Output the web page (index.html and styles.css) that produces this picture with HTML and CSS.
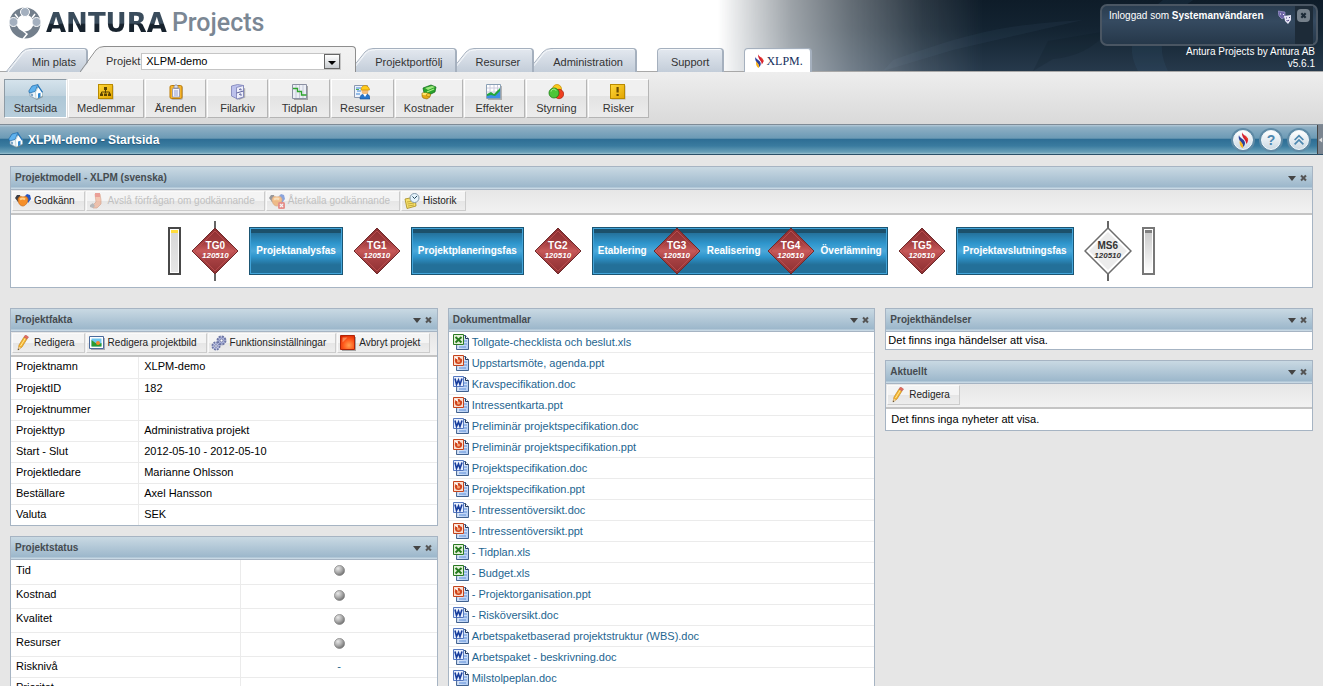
FILE: index.html
```html
<!DOCTYPE html>
<html lang="sv">
<head>
<meta charset="utf-8">
<title>XLPM-demo - Startsida</title>
<link rel="stylesheet" href="styles.css">
</head>
<body>
<svg class="defs" aria-hidden="true">
  <defs>
    <linearGradient id="gTab" x1="0" y1="0" x2="0" y2="1"><stop offset="0" stop-color="#e3e8ef"/><stop offset="1" stop-color="#c3cdd9"/></linearGradient>
    <linearGradient id="gRed" x1="0" y1="0" x2="0" y2="1"><stop offset="0" stop-color="#8c2f31"/><stop offset=".3" stop-color="#9e3a3c"/><stop offset=".5" stop-color="#c85a5a"/><stop offset=".7" stop-color="#a53f41"/><stop offset="1" stop-color="#8c2f31"/></linearGradient>
    <linearGradient id="gGold" x1="0" y1="0" x2="1" y2="1"><stop offset="0" stop-color="#ffd83a"/><stop offset="1" stop-color="#e2a400"/></linearGradient>
    <radialGradient id="gBall" cx=".35" cy=".3" r=".75"><stop offset="0" stop-color="#e9e9e9"/><stop offset=".5" stop-color="#b0b0b0"/><stop offset="1" stop-color="#6c6c6c"/></radialGradient>
    <radialGradient id="gStop" cx=".6" cy=".7" r=".8"><stop offset="0" stop-color="#ffa050"/><stop offset=".5" stop-color="#ff5a1c"/><stop offset="1" stop-color="#d92400"/></radialGradient>
    <linearGradient id="gPage" x1="0" y1="0" x2="1" y2="1"><stop offset="0" stop-color="#ffffff"/><stop offset="1" stop-color="#a9c6f2"/></linearGradient>
  </defs>
  <symbol id="house" viewBox="0 0 16 16">
    <path d="M3 12l6 4 6-3v-2l-6 3z" fill="#777" opacity=".6"/>
    <path d="M2 6v6l6 3 6-3V7L9 3z" fill="#eef5fb" stroke="#7d93a8" stroke-width=".7"/>
    <path d="M7.500 8l3-5 4 5v4l-6.500 3z" fill="#fff" stroke="#8aa" stroke-width=".5"/>
    <path d="M.8 7L4 2l6-1.500L7 7.500 1.500 9z" fill="#5fb2ee" stroke="#1c69a8" stroke-width=".7"/>
    <path d="M10 .5l5 7.500-1 .8-4-6z" fill="#2275bd"/>
    <path d="M10 9.500l2.500-.8v4.600L10 14.200z" fill="#2f87cf"/><path d="M3 9.500l2 .5v2.500l-2-.8z" fill="#7ea6c6"/>
  </symbol>
  <symbol id="org" viewBox="0 0 16 16">
    <rect x="1.500" y="1.500" width="14" height="14" fill="#8a7a50" opacity=".5"/><rect x=".5" y=".5" width="14" height="14" fill="url(#gGold)" stroke="#b98a00"/>
    <path d="M7.500 5v4M3.500 10V8h8v2" fill="none" stroke="#5c4300"/><path d="M6 3h3v3H6zM2 9.500h3V12H2zM6 9.500h3V12H6zM10 9.500h3V12h-3z" fill="#5c4300"/>
  </symbol>
  <symbol id="clip" viewBox="0 0 16 16">
    <rect x="3" y="2" width="12" height="14" rx="2" fill="#888" opacity=".5"/><rect x="2" y="1.500" width="12" height="13" rx="1.500" fill="#f6b52c" stroke="#bd7d08"/>
    <path d="M4.500 4.500h7v8.500h-7z" fill="#f3f5ff" stroke="#8189b5" stroke-width=".7"/><path d="M6 4V2.500L7 1h2l1 1.500V4z" fill="#dfe2ee" stroke="#7c8098" stroke-width=".7"/>
    <path d="M6 7h4M6 9h4M6 11h4" stroke="#8c94c4" stroke-width=".9"/>
  </symbol>
  <symbol id="cabinet" viewBox="0 0 16 16">
    <path d="M8 14.500l6-2V4l1.200.6v9L9 16z" fill="#888" opacity=".6"/><path d="M1.500 2l6-1.500 6 1v11.500l-6 2-6-3z" fill="#bcc1ec" stroke="#7a7fb5" stroke-width=".8"/><path d="M6.500 3.500l7-2v11.500l-7 2z" fill="#f0f1fc" stroke="#7a7fb5" stroke-width=".8"/>
    <path d="M6.500 9l7-2M9 5.500l2-.6v1.500M9 10.500l2-.6v2" fill="none" stroke="#5d639e"/>
  </symbol>
  <symbol id="gantt" viewBox="0 0 16 16">
    <path d="M2 2h14v14H2z" fill="#777" opacity=".6"/><path d="M.5.5h14v14H.5z" fill="#eceff5" stroke="#8b90a2"/><path d="M4 1v13M7.500 1v13M11 1v13" stroke="#c6cad9"/><path d="M1 4.500h4.500v3h4v3.500h5" fill="none" stroke="#2fa52e" stroke-width="1.300"/>
  </symbol>
  <symbol id="people" viewBox="0 0 16 16">
    <path d="M.5 1.500h13v12H.5z" fill="#eef3fb" stroke="#8b98b0"/><path d="M2 4h5M3 7h4M2 10h4" stroke="#3c85d6" stroke-width="1.200"/><path d="M2 5.500h3" stroke="#4caf50"/>
    <path d="M6 15c0-4 2-5 5-5s5 1 5 5z" fill="#2776cc" stroke="#174f92" stroke-width=".6"/><circle cx="11" cy="7" r="3.400" fill="#f3bd7d"/><path d="M7 6c0-6 8-6 8.500 0z" fill="#ffcc1c" stroke="#ca8900" stroke-width=".7"/><path d="M9 10l2 3 2-3" fill="#fff"/>
  </symbol>
  <symbol id="money" viewBox="0 0 16 16">
    <path d="M2 4l8-3 5 2-1 5-6 3-5-2z" fill="#28a32b" stroke="#10651a" stroke-width=".7"/><path d="M4 4l7-2 3 1-7 3z" fill="#9ee77d"/><path d="M6 8l7-3" stroke="#a5ef82" stroke-width="1.200"/>
    <path d="M1 9h5l3 1v3l-3 2-4-1-1-2z" fill="#e6a915" stroke="#8c6400" stroke-width=".6"/><ellipse cx="4" cy="10" rx="2.800" ry="1.200" fill="#ffe36a"/><ellipse cx="7.500" cy="11" rx="2.200" ry="1.500" fill="#f4c735" stroke="#936c05" stroke-width=".5"/>
  </symbol>
  <symbol id="chart" viewBox="0 0 16 16">
    <path d="M2 2h14v14H2z" fill="#777" opacity=".5"/><path d="M.5.5h14v14H.5z" fill="#fff" stroke="#8ba0b5"/><path d="M4 1v10M8 1v8M11.500 1v8M1 4h13M1 8h13" stroke="#ccd"/>
    <path d="M1 10l4-2 3 2 3-3 3-3v6l-4 3-9 0z" fill="#23a63c"/><path d="M1 14v-2l4-1 4 1 5-5v7z" fill="#3d8fe6"/>
  </symbol>
  <symbol id="circles" viewBox="0 0 16 16">
    <circle cx="9" cy="5" r="4.500" fill="#fbc81d" stroke="#c38b00" stroke-width=".7"/><circle cx="11" cy="10" r="4.700" fill="#ee3f20" stroke="#a61d08" stroke-width=".7"/><circle cx="6" cy="9" r="5" fill="#4cc638" stroke="#1b7d12" stroke-width=".8"/><path d="M3 7.500c1-3 4-3 5-1" stroke="#b8f29e" fill="none"/>
  </symbol>
  <symbol id="warn" viewBox="0 0 16 16">
    <rect x="1.500" y="1.500" width="14" height="14" fill="#8a7a50" opacity=".5"/><rect x=".5" y=".5" width="14" height="14" fill="url(#gGold)" stroke="#b98a00"/><path d="M6.500 3h2.200v5.500H6.500zM6.500 10h2.200v2H6.500z" fill="#6b4c00"/>
  </symbol>
  <symbol id="shake" viewBox="0 0 16 16">
    <path d="M0 5l2-3 3 0 1 5-3 2z" fill="#3d3f46"/><path d="M10 3l2-2 3 1 1 4-3 4z" fill="#2456c4"/><path d="M3 6c1-3 3-3 5-2 2-1 4-1 5 2 0 4-3 7-5 7-3 0-5-3-5-7z" fill="#f58f2a" stroke="#c96a18" stroke-width=".7"/><path d="M5 6.500q3-2 5 0" stroke="#ffd08a" fill="none" stroke-width="2"/>
  </symbol>
  <symbol id="thumb" viewBox="0 0 16 16">
    <path d="M6 1h5l1 6v4l-4 4-4 0 0-3 3-3z" fill="#f39a72" stroke="#c2653e" stroke-width=".7"/><path d="M6 0h5v4H6z" fill="#e14d3d"/><path d="M1 12l3-2 2 3-2 2-3-1z" fill="#85888d"/>
  </symbol>
  <symbol id="shakex" viewBox="0 0 16 16">
    <use href="#shake"/><rect x="9" y="9" width="7" height="7" rx="1.500" fill="#e2382e"/><path d="M11 11l3 3M14 11l-3 3" stroke="#fff" stroke-width="1.200"/>
  </symbol>
  <symbol id="history" viewBox="0 0 16 16">
    <path d="M1 6l10-2 1 9-9 2.500z" fill="#f7e16d" stroke="#a48a1c" stroke-width=".8"/><path d="M3 9l7-1M3.500 11l7-1M4 13l6-1" stroke="#b79a2e" stroke-width=".8"/><circle cx="10.500" cy="5" r="4.500" fill="#e4f2fb" stroke="#8298aa"/><path d="M8.500 3.500l2 2 2.500-2.500" fill="none" stroke="#245"/>
  </symbol>
  <symbol id="pencil" viewBox="0 0 16 16">
    <path d="M3 15l1-5 5-8 3 2-5 8z" fill="#f7b52b" stroke="#c18a2a" stroke-width=".7"/><path d="M5.500 11l5-8" stroke="#ffe79a"/><path d="M9 2l1.500-2 3 2L12 4z" fill="#e76b5d" stroke="#b85a50" stroke-width=".6"/><path d="M3 15l.7-3.500L6 13z" fill="#e9cfa7"/><path d="M2.800 15.300l.4-1.800 1 .8z" fill="#333"/>
  </symbol>
  <symbol id="picture" viewBox="0 0 16 16">
    <path d="M2 3h14v12H2z" fill="#667" opacity=".5"/><path d="M.5 1.500h14v12H.5z" fill="#fff" stroke="#4a6a9c"/><path d="M2.500 3.500h10v8h-10z" fill="#6fc7ef"/><path d="M2.500 11.500V5l4 3 3 1 3-1v3.500z" fill="#2c9a2e"/><circle cx="9" cy="8" r="2" fill="#f6862b"/>
  </symbol>
  <symbol id="gears" viewBox="0 0 16 16">
    <circle cx="10.500" cy="5.500" r="4" fill="#aeb6dc" stroke="#6d76a5" stroke-width="2" stroke-dasharray="2.100 1"/><circle cx="10.500" cy="5.500" r="1.500" fill="#fff" stroke="#59628f" stroke-width=".7"/>
    <circle cx="5" cy="11" r="3.600" fill="#c2c8e8" stroke="#6d76a5" stroke-width="1.800" stroke-dasharray="1.900 .9"/><circle cx="5" cy="11" r="1.300" fill="#fff" stroke="#59628f" stroke-width=".7"/>
  </symbol>
  <symbol id="stop" viewBox="0 0 16 16"><path d="M2 2h14v14H2z" fill="#777" opacity=".6"/><path d="M.5.5h14v14H.5z" fill="url(#gStop)" stroke="#b02408"/><path d="M2.500 2.500h5l-5 5z" fill="#ffb27e" opacity=".6"/></symbol>
  <symbol id="page" viewBox="0 0 16 16"><path d="M4 1.500h8.500l3 3v11H3.500z" fill="url(#gPage)" stroke="#40618f"/><path d="M12.500 1.500v3h3" fill="#fff" stroke="#22375a"/><path d="M6 13h7M11 7h3M11 10h3" stroke="#5e8fd8"/></symbol>
  <symbol id="xls" viewBox="0 0 16 16"><use href="#page"/><path d="M.5.5h10v10H.5z" fill="#e3f0d8" stroke="#2b7a22"/><path d="M2.500 3l6 5.500M8.500 3l-6 5.500" stroke="#237a1c" stroke-width="2"/></symbol>
  <symbol id="ppt" viewBox="0 0 16 16"><use href="#page"/><path d="M.5.5h10v10H.5z" fill="#f9e0d2" stroke="#c4431c"/><circle cx="5.500" cy="5.500" r="3.600" fill="#d0441c"/><path d="M2.500 2.500h2v2zM7 2l1.500 2" fill="#fff" stroke="#fff" stroke-width=".8"/><circle cx="5.500" cy="6" r="1.500" fill="#f6a478"/></symbol>
  <symbol id="doc" viewBox="0 0 16 16"><use href="#page"/><path d="M.5.5h10v10H.5z" fill="#eaf1fd" stroke="#5578c0"/><path d="M2 2.500l1.500 6L5.500 4l1.500 4.500 2-6" fill="none" stroke="#173c9c" stroke-width="1.600"/></symbol>
  <symbol id="flame" viewBox="0 0 16 16">
    <path d="M7 0c0 3 6 4 6 8 0 2-1 3-2 4 1-4-5-6-4-12z" fill="#d62030"/><path d="M4 3c0 3 6 4 6 8 0 2-1 3-2 4 1-4-6-6-4-12z" fill="#2a3f9c"/><path d="M5 8c0 2 4 3 3 8-3-1-4-5-3-8z" fill="#f7b21c"/><path d="M10 3c1 2 4 3 3 6-1-2-3-3-3-6z" fill="#e8452c"/>
  </symbol>
  <symbol id="ball" viewBox="0 0 10 10"><circle cx="5" cy="5" r="4.600" fill="url(#gBall)" stroke="#7b7b7b" stroke-width=".6"/></symbol>
  <symbol id="slant" viewBox="0 0 26 24"><path d="M1 24L17 4Q19.500 1 24 1H26V24z" fill="url(#gTab)"/><path d="M0 24L16 4Q19 .5 24 .5H26" fill="none" stroke="#a5b0be"/><path d="M2 24L17 5Q20 2 24 2H26" fill="none" stroke="#f4f7fa"/></symbol>
  <symbol id="slantOn" viewBox="0 0 26 26"><path d="M1 26L17 4Q19.500 1 24 1H26V26z" fill="#efefef"/><path d="M0 26L16 4Q19 .5 24 .5H26" fill="none" stroke="#8e8e8e"/></symbol>
  <symbol id="redGate" viewBox="0 0 48 48"><path d="M24 1L47 24 24 47 1 24z" fill="url(#gRed)" stroke="#6e2a2b"/><path d="M24 4L44 24 24 44 4 24z" fill="none" stroke="#b84c4d"/></symbol>
  <symbol id="whiteGate" viewBox="0 0 48 48"><path d="M24 1L47 24 24 47 1 24z" fill="#fff" stroke="#6d6d6d" stroke-width="1.500"/><path d="M24 5L43 24 24 43 5 24z" fill="#ececec"/></symbol>
</svg>

<header class="top">
  <div class="sky"><svg class="swoosh" viewBox="0 0 620 71" preserveAspectRatio="xMaxYMid slice"><path d="M190 60C270 32 300 25 380 20L250 50 180 71z" fill="#4a6b87" opacity=".1"/><path d="M330 71l15-30 60-10q-20 25-55 28z" fill="#07121c" opacity=".15"/><path d="M460 0q-45 35-25 71h30q-20-40 25-71z" fill="#3c6486" opacity=".15"/></svg></div>
  <a class="logo" href="#" aria-label="Antura Projects">
    <svg class="logoMark" viewBox="0 0 32 32"><circle cx="16" cy="16" r="12" fill="none" stroke="#737f8c" stroke-width="7"/><g fill="#a4b0bf" stroke="#fff" stroke-width="1"><circle cx="16" cy="5" r="4.500"/><circle cx="4.500" cy="15" r="4.500"/><circle cx="27.500" cy="15" r="4.500"/></g><path d="M13 23l5 4-4 5M6 7l3 4M26 7l-3 4" stroke="#fff" stroke-width="1.500" fill="none"/></svg>
    <span class="brand">ANTURA</span><span class="product">Projects</span>
  </a>
  <nav class="tabs">
    <a class="tab first" href="#"><svg class="edge"><use href="#slant"/></svg><span>Min plats</span></a>
    <div class="tab current"><svg class="edge"><use href="#slantOn"/></svg><div class="pick"><label for="project">Projekt</label><div class="combo"><select id="project"><option>XLPM-demo</option></select><i class="arrow"></i></div></div></div>
    <a class="tab t3" href="#"><svg class="edge"><use href="#slant"/></svg><span>Projektportfölj</span></a>
    <a class="tab t2" href="#"><svg class="edge"><use href="#slant"/></svg><span>Resurser</span></a>
    <a class="tab t1" href="#"><svg class="edge"><use href="#slant"/></svg><span>Administration</span></a>
    <a class="tab box" href="#"><span>Support</span></a>
    <a class="tab box xlpm" href="#"><span><svg class="ic"><use href="#flame"/></svg>XLPM.</span></a>
  </nav>
  <div class="account">
    <div class="login"><p>Inloggad som <b>Systemanvändaren</b></p>
      <svg class="masks" viewBox="0 0 14 14"><path d="M0 1l7 1v5l-3 2-3-3z" fill="#6f66a8" stroke="#aaa3d6" stroke-width=".6"/><path d="M6 6l7-1v5l-3 4-3-3z" fill="#e8e6f8"/><path d="M2 4h1M5 4.500h1" stroke="#fff"/><path d="M8 8h1M11 7.500h1M8.500 10.500q1.500 1 2.500-.5" stroke="#4c4484" fill="none"/></svg>
      <div class="side"><button class="out" aria-label="Logga ut"><svg viewBox="0 0 12 12"><path d="M4 4l4 4M8 4l-4 4" stroke="#1b2936" stroke-width="2"/></svg></button></div></div>
    <p class="version">Antura Projects by Antura AB<br>v5.6.1</p>
  </div>
</header>

<nav class="tools">
  <a class="tool on" href="#"><svg class="ic"><use href="#house"/></svg>Startsida</a>
  <a class="tool" href="#"><svg class="ic"><use href="#org"/></svg>Medlemmar</a>
  <a class="tool" href="#"><svg class="ic"><use href="#clip"/></svg>Ärenden</a>
  <a class="tool" href="#"><svg class="ic"><use href="#cabinet"/></svg>Filarkiv</a>
  <a class="tool" href="#"><svg class="ic"><use href="#gantt"/></svg>Tidplan</a>
  <a class="tool" href="#"><svg class="ic"><use href="#people"/></svg>Resurser</a>
  <a class="tool" href="#"><svg class="ic"><use href="#money"/></svg>Kostnader</a>
  <a class="tool" href="#"><svg class="ic"><use href="#chart"/></svg>Effekter</a>
  <a class="tool" href="#"><svg class="ic"><use href="#circles"/></svg>Styrning</a>
  <a class="tool" href="#"><svg class="ic"><use href="#warn"/></svg>Risker</a>
</nav>

<div class="titlebar">
  <svg class="ic"><use href="#house"/></svg><h1>XLPM-demo - Startsida</h1>
  <button class="round" aria-label="XLPM"><svg class="big" viewBox="0 0 16 16"><use href="#flame"/></svg></button>
  <button class="round" aria-label="Hjälp">?</button>
  <button class="round" aria-label="Fäll ihop"><svg viewBox="0 0 16 16"><path d="M3 8l5-5 5 5M3 13l5-5 5 5" fill="none" stroke="#4d88b0" stroke-width="2"/></svg></button>
  <button class="drawer" aria-label="Visa sidopanel"><svg viewBox="0 0 6 8"><path d="M5 1v6L1 4z" fill="#ddd"/></svg></button>
</div>

<main>
  <section class="panel">
    <div class="head"><h2>Projektmodell - XLPM (svenska)</h2><button class="down" aria-label="Meny"></button><button class="close" aria-label="Stäng"></button></div>
    <div class="bar">
      <button><svg class="ic"><use href="#shake"/></svg>Godkänn</button>
      <button disabled><svg class="ic"><use href="#thumb"/></svg>Avslå förfrågan om godkännande</button>
      <button disabled><svg class="ic"><use href="#shakex"/></svg>Återkalla godkännande</button>
      <button><svg class="ic"><use href="#history"/></svg>Historik</button>
    </div>
    <div class="model">
      <div class="post start"></div>
      <div class="gate pin"><svg><use href="#redGate"/></svg><b>TG0</b><em>120510</em></div>
      <div class="phase">Projektanalysfas</div>
      <div class="gate"><svg><use href="#redGate"/></svg><b>TG1</b><em>120510</em></div>
      <div class="phase">Projektplaneringsfas</div>
      <div class="gate"><svg><use href="#redGate"/></svg><b>TG2</b><em>120510</em></div>
      <div class="phase joined">Etablering
        <div class="gate"><svg><use href="#redGate"/></svg><b>TG3</b><em>120510</em></div>Realisering
        <div class="gate"><svg><use href="#redGate"/></svg><b>TG4</b><em>120510</em></div>Överlämning</div>
      <div class="gate"><svg><use href="#redGate"/></svg><b>TG5</b><em>120510</em></div>
      <div class="phase">Projektavslutningsfas</div>
      <div class="gate pin white"><svg><use href="#whiteGate"/></svg><b>MS6</b><em>120510</em></div>
      <div class="post"></div>
    </div>
  </section>

  <div class="columns">
    <div class="col">
      <section class="panel">
        <div class="head"><h2>Projektfakta</h2><button class="down" aria-label="Meny"></button><button class="close" aria-label="Stäng"></button></div>
        <div class="bar">
          <button><svg class="ic"><use href="#pencil"/></svg>Redigera</button>
          <button><svg class="ic"><use href="#picture"/></svg>Redigera projektbild</button>
          <button><svg class="ic"><use href="#gears"/></svg>Funktionsinställningar</button>
          <button><svg class="ic"><use href="#stop"/></svg>Avbryt projekt</button>
        </div>
        <table class="facts">
          <tr><th>Projektnamn</th><td>XLPM-demo</td></tr>
          <tr><th>ProjektID</th><td>182</td></tr>
          <tr><th>Projektnummer</th><td></td></tr>
          <tr><th>Projekttyp</th><td>Administrativa projekt</td></tr>
          <tr><th>Start - Slut</th><td>2012-05-10 - 2012-05-10</td></tr>
          <tr><th>Projektledare</th><td>Marianne Ohlsson</td></tr>
          <tr><th>Beställare</th><td>Axel Hansson</td></tr>
          <tr><th>Valuta</th><td>SEK</td></tr>
        </table>
      </section>
      <section class="panel">
        <div class="head"><h2>Projektstatus</h2><button class="down" aria-label="Meny"></button><button class="close" aria-label="Stäng"></button></div>
        <table class="status">
          <tr><th>Tid</th><td><svg class="dot"><use href="#ball"/></svg></td></tr>
          <tr><th>Kostnad</th><td><svg class="dot"><use href="#ball"/></svg></td></tr>
          <tr><th>Kvalitet</th><td><svg class="dot"><use href="#ball"/></svg></td></tr>
          <tr><th>Resurser</th><td><svg class="dot"><use href="#ball"/></svg></td></tr>
          <tr class="low"><th>Risknivå</th><td><a href="#">-</a></td></tr>
          <tr class="low"><th>Prioritet</th><td></td></tr>
        </table>
      </section>
    </div>
    <div class="col">
      <section class="panel">
        <div class="head"><h2>Dokumentmallar</h2><button class="down" aria-label="Meny"></button><button class="close" aria-label="Stäng"></button></div>
        <ul class="docs">
          <li><svg class="ic"><use href="#xls"/></svg><a href="#">Tollgate-checklista och beslut.xls</a></li>
          <li><svg class="ic"><use href="#ppt"/></svg><a href="#">Uppstartsmöte, agenda.ppt</a></li>
          <li><svg class="ic"><use href="#doc"/></svg><a href="#">Kravspecifikation.doc</a></li>
          <li><svg class="ic"><use href="#ppt"/></svg><a href="#">Intressentkarta.ppt</a></li>
          <li><svg class="ic"><use href="#doc"/></svg><a href="#">Preliminär projektspecifikation.doc</a></li>
          <li><svg class="ic"><use href="#ppt"/></svg><a href="#">Preliminär projektspecifikation.ppt</a></li>
          <li><svg class="ic"><use href="#doc"/></svg><a href="#">Projektspecifikation.doc</a></li>
          <li><svg class="ic"><use href="#ppt"/></svg><a href="#">Projektspecifikation.ppt</a></li>
          <li><svg class="ic"><use href="#doc"/></svg><a href="#">- Intressentöversikt.doc</a></li>
          <li><svg class="ic"><use href="#ppt"/></svg><a href="#">- Intressentöversikt.ppt</a></li>
          <li><svg class="ic"><use href="#xls"/></svg><a href="#">- Tidplan.xls</a></li>
          <li><svg class="ic"><use href="#xls"/></svg><a href="#">- Budget.xls</a></li>
          <li><svg class="ic"><use href="#ppt"/></svg><a href="#">- Projektorganisation.ppt</a></li>
          <li><svg class="ic"><use href="#doc"/></svg><a href="#">- Risköversikt.doc</a></li>
          <li><svg class="ic"><use href="#doc"/></svg><a href="#">Arbetspaketbaserad projektstruktur (WBS).doc</a></li>
          <li><svg class="ic"><use href="#doc"/></svg><a href="#">Arbetspaket - beskrivning.doc</a></li>
          <li><svg class="ic"><use href="#doc"/></svg><a href="#">Milstolpeplan.doc</a></li>
        </ul>
      </section>
    </div>
    <div class="col">
      <section class="panel">
        <div class="head"><h2>Projekthändelser</h2><button class="down" aria-label="Meny"></button><button class="close" aria-label="Stäng"></button></div>
        <p class="note tight">Det finns inga händelser att visa.</p>
      </section>
      <section class="panel">
        <div class="head"><h2>Aktuellt</h2><button class="down" aria-label="Meny"></button><button class="close" aria-label="Stäng"></button></div>
        <div class="bar"><button><svg class="ic"><use href="#pencil"/></svg>Redigera</button></div>
        <p class="note">Det finns inga nyheter att visa.</p>
      </section>
    </div>
  </div>
</main>
</body>
</html>
```

FILE: styles.css
```css
* { box-sizing: border-box; }
body { margin: 0; height: 100vh; overflow: hidden; background: #e6e6e6; color: #000; font: 11px/14px "Liberation Sans", Arial, sans-serif; }
a { color: inherit; text-decoration: none; }
button { font: inherit; padding: 0; border: 0; background: none; }
h1, h2, p, ul { margin: 0; padding: 0; }
ul { list-style: none; }
.defs { position: absolute; width: 0; height: 0; }
.ic { width: 16px; height: 16px; flex: none; }

/* Top banner */
.top { position: relative; display: flex; flex-wrap: wrap; height: 72px; background: #fff; border-bottom: 1px solid #a8a8a8; }
.sky { position: absolute; inset: 0 0 0 auto; width: 620px; background: linear-gradient(#0e1c29, #132331 40%, #26394b); mask-image: linear-gradient(90deg, transparent 15px, rgba(0,0,0,.2) 50px, rgba(0,0,0,.42) 90px, rgba(0,0,0,.65) 150px, rgba(0,0,0,.88) 220px, #000 280px); }
.swoosh { width: 100%; height: 100%; }
.logo { display: flex; align-items: center; height: 46px; padding-left: 9px; width: 100%; position: relative; }
.logoMark { width: 32px; height: 32px; margin-right: 5px; }
.brand { font: bold 26px/32px "DejaVu Sans", sans-serif; background: linear-gradient(#3a4c5c 50%, #17222d 55%); background-clip: text; color: transparent; }
.product { font: 500 25px/32px Roboto, sans-serif; color: #7b8794; margin-left: 5px; }
.tabs { position: relative; display: flex; align-items: flex-end; height: 26px; padding-left: 6px; color: #333; }
.tab { display: flex; position: relative; height: 24px; margin-left: -7px; }
.edge { width: 26px; height: 24px; }
.tab > span { display: flex; align-items: center; height: 24px; padding: 2px 12px 0 0; border-top: 1px solid #a5b0be; border-right: 2px solid #a5b0be; border-radius: 0 4px 0 0; background: linear-gradient(#e3e8ef, #c3cdd9); box-shadow: inset 0 1px #f4f7fa; }
.tab.first { margin-left: 0; }
.tab.first > span { padding-right: 10px; }
.tab.current { height: 26px; z-index: 4; margin-left: -8px; }
.current .edge { height: 26px; }
.pick { display: flex; align-items: center; gap: 1px; height: 26px; padding: 3px 14px 0 0; background: linear-gradient(#f2f2f2, #ededed); border-top: 1px solid #8e8e8e; border-right: 1px solid #8e8e8e; border-radius: 0 4px 0 0; }
.combo { position: relative; }
.combo select { appearance: none; display: block; width: 200px; height: 17px; font: inherit; padding: 0 20px 0 4px; border: 1px solid #c5c5c5; border-radius: 0; background: #fff; color: #000; }
.arrow { position: absolute; right: 1px; top: 1px; width: 16px; height: 15px; border: 1px solid #666; background: linear-gradient(#fff, #c8ccd0); pointer-events: none; }
.arrow::after { content: ""; position: absolute; left: 3px; top: 6px; border: 4px solid transparent; border-top-color: #000; border-bottom: 0; }
.t3 { z-index: 3; }
.t2 { z-index: 2; }
.t1 { z-index: 1; }
.tab.box { margin-left: 20px; }
.tab.box > span { padding: 2px 13px 0; border-left: 1px solid #a5b0be; border-radius: 4px 4px 0 0; }
.tab.xlpm > span { padding: 0 7px; background: #fff; font: 12px/16px "Liberation Serif", serif; color: #15305c; }
.xlpm .ic { width: 14px; }
.account { position: absolute; right: 5px; top: 4px; width: 218px; color: #fff; font-size: 10px; line-height: 12px; z-index: 5; }
.login { display: flex; height: 42px; padding: 0 3px 0 7px; border: 2px solid #4a5663; border-radius: 7px; background: linear-gradient(#2a3d50, #354a60 40%, #26384a); }
.login p { flex: 1; padding-top: 4px; white-space: nowrap; }
.masks { width: 14px; height: 14px; margin: 4px 3px 0 0; }
.side { width: 18px; padding: 3px 2px; background: #1d2b38; }
.out { display: block; width: 13px; height: 13px; border-radius: 4px; background: #76818b; }
.out svg { display: block; width: 13px; height: 13px; }
.version { text-align: right; padding-right: 3px; }

/* Project tools */
.tools { display: flex; gap: 1px; height: 52px; padding: 7px 4px; background: linear-gradient(#eeeeee, #d9d9d9); color: #333; }
.tool { display: flex; flex: none; flex-direction: column; align-items: center; gap: 1px; min-width: 61px; height: 39px; padding: 4px 8px 0; border: 1px solid #fff; border-right: 1px solid #b5b5b5; border-bottom: 1px solid #b5b5b5; background: linear-gradient(#f0f0f0 42%, #e3e3e3 43%, #ececec); }
.tool.on { border-color: #8e9ba5 #fff #fff #8e9ba5; min-width: 63px; background: linear-gradient(#d5e3ec, #bfd2de 42%, #aec7d6 43%, #b7cedc); }

/* Page title */
.titlebar { display: flex; align-items: center; height: 31px; padding-left: 8px; border-top: 1px solid #7f8b96; border-bottom: 1px solid #2b5068; background: linear-gradient(#b4c9d7, #8eafc4 8%, #6b9ab5 46%, #2d6d94 48%, #3a7b9f 72%, #6aa0b8 94%, #9cc2d0); }
.titlebar h1 { flex: 1; margin-left: 4px; font-size: 12px; line-height: 16px; color: #fff; text-shadow: 0 1px #2b5c7c; }
.round { display: flex; align-items: center; justify-content: center; width: 20px; height: 20px; margin-right: 8px; border: 1px solid #f4f8fb; border-radius: 50%; background: linear-gradient(#fff, #ccd9e3); box-shadow: 0 0 0 2px #5f8aa5; color: #4d88b0; font-weight: bold; font-size: 14px; }
.round svg { width: 14px; height: 14px; }
.round .big { width: 16px; height: 16px; flex: none; }
.drawer { width: 6px; height: 29px; border-left: 1px solid #444; background: #7b8590; display: flex; align-items: center; }
.drawer svg { width: 5px; height: 8px; }

/* Panels */
main { padding: 11px 10px 0; }
.panel { background: #fff; border: 1px solid #a6b4c3; }
.head { display: flex; align-items: center; height: 23px; padding: 0 4px 2px; background: linear-gradient(#c9d9e3, #9cb7cb 20px, #c7d8e4 21px, #c7d8e4 22px, #a6b4c3 22px); }
.head h2 { flex: 1; font-size: 10px; line-height: 14px; color: #454b50; }
.down, .close { position: relative; width: 10px; height: 10px; }
.down::after { content: ""; position: absolute; left: 0; top: 3px; border: 4px solid transparent; border-top: 5px solid #444; border-bottom: 0; }
.close::before, .close::after { content: ""; position: absolute; left: 2px; top: 4px; width: 7px; height: 2px; background: #555; transform: rotate(45deg); }
.close::after { transform: rotate(-45deg); }
.bar { display: flex; gap: 1px; height: 25px; padding: 1px 1px 2px; background: linear-gradient(#e6e6e6, #f2f2f2); border-bottom: 2px solid #c4c4c4; }
.bar button { display: flex; flex: none; align-items: center; gap: 3px; height: 20px; padding: 0 9px 0 2px; font-size: 10px; white-space: nowrap; color: #222; border: 1px solid #fafafa; border-right-color: #ccc; border-bottom-color: #ccc; background: linear-gradient(#f4f4f4 50%, #e6e6e6 51%, #ededed); }
.bar button:disabled { color: #c0c0c0; }
.bar button:disabled .ic { opacity: .5; }

.model { display: flex; justify-content: center; align-items: center; gap: 10px; height: 72px; font-size: 10px; line-height: 12px; font-weight: bold; color: #fff; }
.post { width: 13px; height: 48px; border: 2px solid #777; background: linear-gradient(#808080 4px, #ccc 4px, #fff); background-clip: content-box; padding: 1px; }
.start { border: 2px solid #484848; background-image: linear-gradient(#ffdc3c 4px, #d8d8d8 4px, #e6e6e6); }
.gate { position: relative; display: flex; flex-direction: column; align-items: center; justify-content: center; width: 48px; height: 48px; }
.gate svg { position: absolute; inset: 0; width: 48px; height: 48px; }
.gate b, .gate em { position: relative; line-height: 10px; }
.gate em { font-size: 8px; }
.pin::before { content: ""; position: absolute; left: 23px; top: -6px; width: 2px; height: 60px; background: #666; }
.white { color: #333; }
.phase { display: flex; align-items: center; gap: 6px; height: 48px; padding: 0 6px; white-space: nowrap; border: 1px solid #1b5573; box-shadow: inset 0 0 0 1px #43a5da, inset 0 5px #1c506b; background: linear-gradient(#24709a 10%, #2f96cd 34%, #4ba8d9 50%, #2f96cd 62%, #237099 80%); }
.joined { padding: 0 5px; }

.columns { display: grid; grid-template-columns: repeat(3, minmax(0, 1fr)); gap: 10px; align-items: start; margin-top: 20px; }
.col { display: grid; gap: 10px; }
table { width: 100%; border-collapse: collapse; }
th, td { height: 21px; padding: 0 5px 2px; font-weight: normal; text-align: left; border-bottom: 1px solid #ebebeb; }
td { border-left: 1px solid #ebebeb; }
th { width: 30%; }
tr:last-child > * { border-bottom: 0; }
.status th { width: 54%; padding-bottom: 4px; }
.status td { padding-bottom: 2px; text-align: center; }
.status th, .status td { height: 24px; }
.status .low > * { height: 21px; padding-bottom: 2px; }
.dot { display: block; width: 11px; height: 11px; margin: 0 auto; }
.status a, .docs { color: #1e6590; }
.docs li { display: flex; align-items: center; gap: 3px; height: 21px; padding-left: 4px; border-bottom: 1px solid #ebebeb; }
.note { padding: 3px 5px 4px; }
.tight { padding: 1px 2px 2px; }
```
